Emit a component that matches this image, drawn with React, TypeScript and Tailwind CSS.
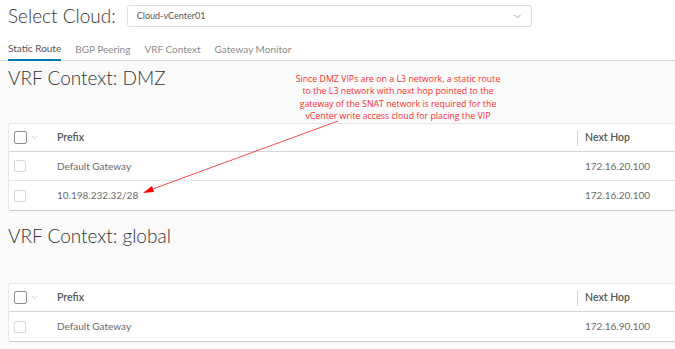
import { ChevronDown } from 'lucide-react';

type Route = { prefix: string; nextHop: string };

const dmzRoutes: Route[] = [
  { prefix: 'Default Gateway', nextHop: '172.16.20.100' },
  { prefix: '10.198.232.32/28', nextHop: '172.16.20.100' },
];

const globalRoutes: Route[] = [{ prefix: 'Default Gateway', nextHop: '172.16.90.100' }];

const tabs = ['Static Route', 'BGP Peering', 'VRF Context', 'Gateway Monitor'];

function RouteTable({ routes }: { routes: Route[] }) {
  return (
    <div className="w-[700px] bg-white border border-[#e8e8e8] border-b-[#c8c8c8] rounded-sm">
      <div className="flex items-center h-[28px] border-b border-[#d4d4d4]">
        <div className="w-[48px] flex items-center pl-[5px] gap-[3px]">
          <span className="w-[13px] h-[13px] border border-[#8c8c8c] rounded-[2px] bg-white" />
          <ChevronDown className="w-[9px] h-[9px] text-[#aaa]" strokeWidth={1.5} />
        </div>
        <div className="w-[520px] text-[10.5px] font-semibold text-[#565656]">Prefix</div>
        <div className="flex items-center h-full">
          <span className="w-px h-[16px] bg-[#d4d4d4]" />
          <span className="pl-[7px] text-[10.5px] font-semibold text-[#565656]">Next Hop</span>
        </div>
      </div>
      {routes.map((r, i) => (
        <div
          key={i}
          className={`flex items-center h-[29px] ${i < routes.length - 1 ? 'border-b border-[#e4e4e4]' : ''}`}
        >
          <div className="w-[48px] pl-[5px]">
            <span className="block w-[12px] h-[12px] border border-[#d8d8d8] rounded-[2px]" />
          </div>
          <div className="w-[520px] text-[10px] text-[#6a6a6a]">{r.prefix}</div>
          <div className="pl-[8px] text-[10px] text-[#6a6a6a]">{r.nextHop}</div>
        </div>
      ))}
    </div>
  );
}

export default function App() {
  return (
    <div
      className="relative w-full h-[349px] overflow-hidden bg-[#fafafa]"
      style={{ fontFamily: 'Lato, "Noto Sans", sans-serif' }}
    >
      <div className="bg-white border-b border-[#dcdcdc]">
        <div className="flex items-center gap-[11px] pl-2 pt-[5px]">
          <h1 className="text-[19px] leading-[22px] font-light text-[#333]">Select Cloud:</h1>
          <div className="w-[405px] h-[22px] flex items-center justify-between border border-[#dedede] rounded-[3px] pl-[9px] pr-[8px]">
            <span className="text-[9px] text-[#555]">Cloud-vCenter01</span>
            <ChevronDown className="w-[11px] h-[11px] text-[#777]" strokeWidth={1.5} />
          </div>
        </div>
        <div className="flex gap-[14px] px-2 mt-[10px]">
          {tabs.map((t, i) => (
            <div
              key={t}
              className={`h-[24px] flex items-center text-[10px] -mb-px ${
                i === 0 ? 'border-b-2 border-[#0079b8] text-[#565656]' : 'text-[#8c8c8c]'
              }`}
            >
              {t}
            </div>
          ))}
        </div>
      </div>

      <div className="pl-2">
        <h2 className="mt-[6px] text-[19px] leading-[22px] font-light text-[#333]">VRF Context: DMZ</h2>
        <div className="mt-[34px]">
          <RouteTable routes={dmzRoutes} />
        </div>
        <h2 className="mt-[14px] text-[19px] leading-[22px] font-light text-[#333]">VRF Context: global</h2>
        <div className="mt-[36px]">
          <RouteTable routes={globalRoutes} />
        </div>
      </div>

      <div
        className="absolute left-[283px] top-[73px] w-[230px] text-center text-[8.8px] leading-[12.3px] text-[#ff3030]"
        style={{ fontFamily: '"Open Sans", sans-serif' }}
      >
        Since DMZ VIPs are on a L3 network, a static route
        <br />
        to the L3 network with next hop pointed to the
        <br />
        gateway of the SNAT network is required for the
        <br />
        vCenter write access cloud for placing the VIP
      </div>

      <svg className="absolute inset-0 pointer-events-none" width="675" height="349">
        <line x1="338" y1="121" x2="150" y2="190" stroke="#ff4a4a" strokeWidth="1" />
        <polygon points="143,193 152,186 154,192" fill="#f00" />
      </svg>
    </div>
  );
}
